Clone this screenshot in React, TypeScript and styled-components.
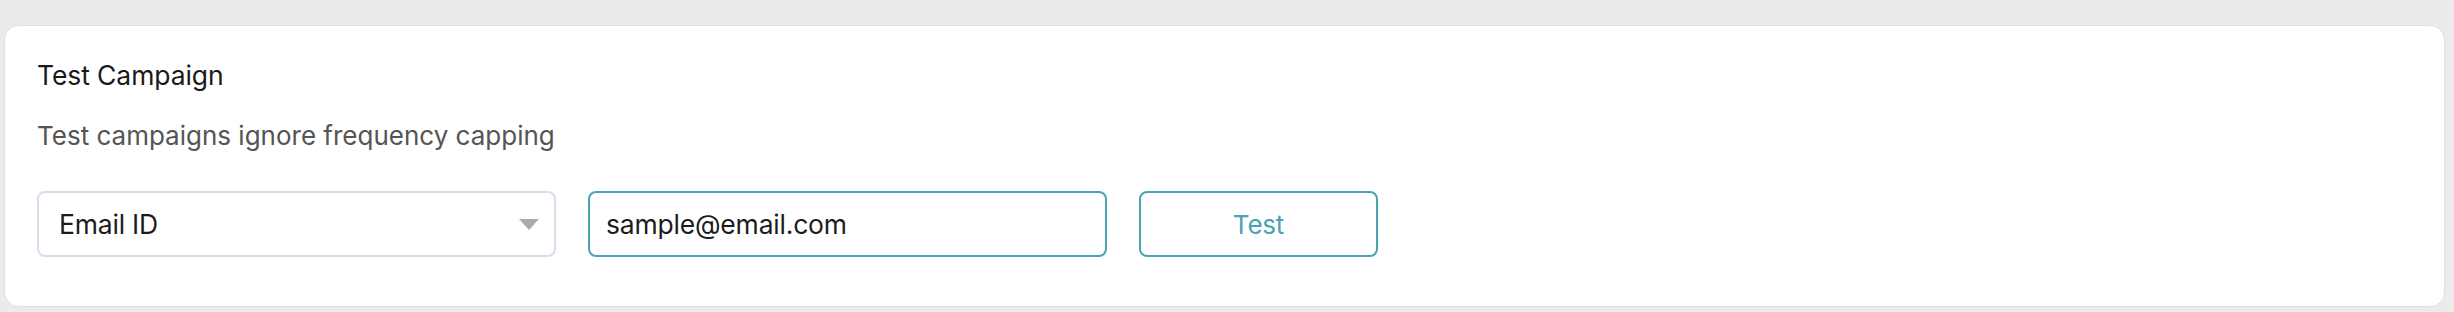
import styled, { createGlobalStyle } from "styled-components";

const GlobalStyle = createGlobalStyle`
  html, body {
    margin: 0;
    padding: 0;
    background: #ebebeb;
    font-family: Inter, Lato, "Open Sans", sans-serif;
  }
`;

const Page = styled.div`
  padding: 25px 9px 8px 4px;
`;

const Card = styled.section`
  background: #ffffff;
  border: 1.5px solid #dde1ee;
  border-radius: 15px;
  padding: 32px 32px 49px 32px;
`;

const Title = styled.h3`
  margin: 0;
  font-size: 26.5px;
  font-weight: 400;
  line-height: 34px;
  letter-spacing: -0.1px;
  color: #1a1a1a;
`;

const Subtitle = styled.p`
  margin: 28px 0 0;
  font-size: 26px;
  line-height: 32px;
  letter-spacing: 0;
  color: #555555;
`;

const Row = styled.div`
  display: flex;
  align-items: center;
  gap: 32px;
  margin-top: 39px;
`;

const Field = styled.div<{ $active?: boolean }>`
  box-sizing: border-box;
  width: 519px;
  height: 66px;
  display: flex;
  align-items: center;
  justify-content: space-between;
  padding: 0 15px 0 ${(p) => (p.$active ? "16px" : "20px")};
  border: 2px solid ${(p) => (p.$active ? "#4aa3b4" : "#d8ddeb")};
  border-radius: 8px;
  font-size: 26.5px;
  letter-spacing: -0.2px;
  color: #1c1c1c;
`;

const Caret = styled.span`
  width: 0;
  height: 0;
  border-left: 10px solid transparent;
  border-right: 10px solid transparent;
  border-top: 11px solid #aaaaaa;
`;

const TestButton = styled.button`
  box-sizing: border-box;
  width: 239px;
  height: 66px;
  background: #ffffff;
  border: 2px solid #4aa3b4;
  border-radius: 8px;
  font-family: inherit;
  font-size: 26px;
  letter-spacing: -0.2px;
  color: #4aa3b4;
  cursor: pointer;
`;

export default function App() {
  return (
    <>
      <GlobalStyle />
      <Page>
        <Card>
          <Title>Test Campaign</Title>
          <Subtitle>Test campaigns ignore frequency capping</Subtitle>
          <Row>
            <Field>
              <span>Email ID</span>
              <Caret />
            </Field>
            <Field $active>
              <span>sample@email.com</span>
            </Field>
            <TestButton>Test</TestButton>
          </Row>
        </Card>
      </Page>
    </>
  );
}
